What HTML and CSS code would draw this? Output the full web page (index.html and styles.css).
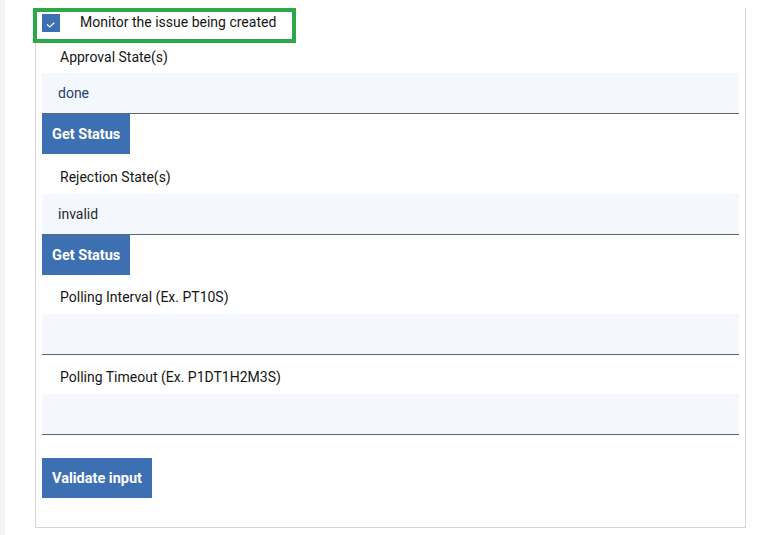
FILE: index.html
```html
<!DOCTYPE html>
<html lang="en">
<head>
<meta charset="utf-8">
<title>Issue form</title>
<link rel="stylesheet" href="styles.css">
</head>
<body>
<div class="page">
  <div class="strip"></div>
  <div class="main">
    <div class="panel">
      <div class="check-row">
        <span class="checkbox">
          <svg width="18" height="18" viewBox="0 0 18 18"><polyline points="5,10.5 7.8,13 12.2,8.8" fill="none" stroke="#ffffff" stroke-width="1.2"/></svg>
        </span>
        <span class="check-label">Monitor the issue being created</span>
      </div>

      <div class="label first">Approval State(s)</div>
      <div class="field"><span class="value blue">done</span></div>
      <button class="btn">Get Status</button>

      <div class="label">Rejection State(s)</div>
      <div class="field"><span class="value">invalid</span></div>
      <button class="btn">Get Status</button>

      <div class="label tight">Polling Interval (Ex. PT10S)</div>
      <div class="field"></div>

      <div class="label tight">Polling Timeout (Ex. P1DT1H2M3S)</div>
      <div class="field"></div>

      <button class="btn validate">Validate input</button>
    </div>
  </div>
</div>
</body>
</html>
```

FILE: styles.css
```css
html, body {
  margin: 0;
  padding: 0;
  background: #ffffff;
}

body {
  font-family: Roboto, "Liberation Sans", sans-serif;
  color: #161616;
}

.page {
  display: flex;
  height: 535px;
  overflow: hidden;
}

.strip {
  width: 5px;
  flex: none;
  background: #f3f3f3;
}

.main {
  padding-left: 30px;
}

.panel {
  width: 711px;
  border: 1px solid #d6d6d6;
  border-top: none;
  padding: 0 6px 29px 6px;
  box-sizing: border-box;
}

.check-row {
  display: flex;
  align-items: flex-start;
  margin: 8px 0 0 -9px;
  width: 263px;
  height: 35px;
  box-sizing: border-box;
  border: 4px solid #2aa84a;
  padding: 2px 0 0 5px;
}

.checkbox {
  width: 18px;
  height: 18px;
  background: #3d70b2;
  display: flex;
  flex: none;
}

.check-label {
  margin-left: 20px;
  font-size: 14px;
  line-height: 18px;
  margin-top: -1px;
}

.label {
  font-size: 14px;
  line-height: 16px;
  padding-left: 18px;
  margin: 15px 0 9px;
}

.label.first {
  margin-top: 6px;
  margin-bottom: 8px;
}

.label.tight {
  margin-top: 14px;
}

.field {
  height: 40px;
  background: #f4f7fb;
  border-bottom: 1px solid #5a6872;
  display: flex;
  align-items: center;
  padding-left: 16px;
}

.value {
  font-size: 14px;
  color: #1f2a30;
}

.value.blue {
  color: #1f3f73;
}

.btn {
  display: block;
  height: 40px;
  padding: 0 10px;
  border: none;
  background: #3d70b2;
  color: #ffffff;
  font-family: Roboto, "Liberation Sans", sans-serif;
  font-weight: 700;
  font-size: 14.5px;
  margin: 0;
}

.btn.validate {
  margin-top: 23px;
}
```
